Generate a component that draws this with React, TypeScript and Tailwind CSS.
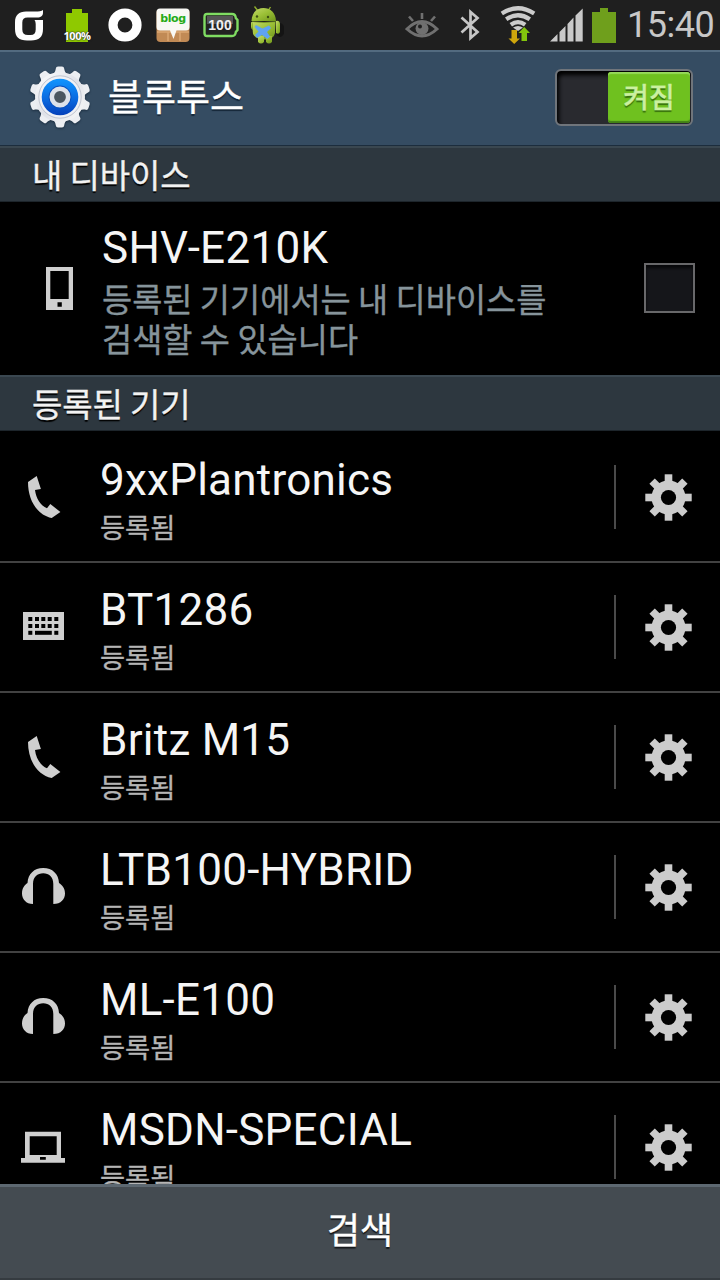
import clsx from 'clsx';
import React, { useState } from 'react';

type DeviceKind = 'phone' | 'keyboard' | 'headphones' | 'laptop';

interface Device {
  name: string;
  kind: DeviceKind;
}

const devices: Device[] = [
  { name: '9xxPlantronics', kind: 'phone' },
  { name: 'BT1286', kind: 'keyboard' },
  { name: 'Britz M15', kind: 'phone' },
  { name: 'LTB100-HYBRID', kind: 'headphones' },
  { name: 'ML-E100', kind: 'headphones' },
  { name: 'MSDN-SPECIAL', kind: 'laptop' },
];

const latin = "font-['Roboto','Noto_Sans_CJK_KR',sans-serif]";
const korean =
  "font-['Noto_Sans_CJK_KR',sans-serif] [-webkit-text-stroke:0.35px_currentColor]";

const DeviceIcon = ({ kind }: { kind: DeviceKind }) => (
  <svg viewBox="0 0 48 48" className="w-12 h-12 shrink-0" fill="#cfcfcf">
    {kind === 'phone' && (
      <path d="M8 9 16.7 3 20.9 16 15 17C16 25.5 20.5 32.5 27 35.3L30.3 31 40.4 39 31.7 45C17 42 8 27 8 9Z" />
    )}
    {kind === 'keyboard' && (
      <>
        <path d="M3 9H44V37H3Z" />
        <g fill="#000">
          {[8.3, 15, 21.3, 27.7, 34.3].map(x => (
            <React.Fragment key={x}>
              <rect x={x} y={14} width={4} height={4} />
              <rect x={x} y={21} width={4} height={4} />
            </React.Fragment>
          ))}
          <rect x={8.3} y={27.8} width={4} height={4} />
          <rect x={15} y={27.8} width={16.8} height={4} />
          <rect x={34.3} y={27.8} width={4} height={4} />
        </g>
      </>
    )}
    {kind === 'headphones' && (
      <path d="M13 41C6 41 2 36 2 30.5 2 25 4.6 22 7.5 20 8 11 14 5 23.2 5 32.5 5 38.6 11 39 20 42 22 45 25 45 30.5 45 36 41 41 33.3 41V21C33.3 14 29 10.3 23.2 10.3 17.4 10.3 13 14 13 21Z" />
    )}
    {kind === 'laptop' && (
      <path
        fillRule="evenodd"
        d="M5 8.7H41V35H45V39.7H1V35H5ZM9.7 13.3V32H36.7V13.3ZM20 34V36.8H25.8V34Z"
      />
    )}
  </svg>
);

const GearIcon = () => (
  <svg viewBox="-24.5 -24.5 48 48" className="w-12 h-12" fill="#cccccc">
    {[0, 45, 90, 135].map(angle => (
      <rect
        key={angle}
        x={-3.8}
        y={-23.2}
        width={7.6}
        height={46.4}
        transform={`rotate(${angle})`}
      />
    ))}
    <circle r={17} />
    <circle r={7.6} fill="#000" />
  </svg>
);

const SettingsLogo = () => (
  <svg viewBox="-32 -32 64 64" className="w-16 h-16 drop-shadow-[0_1px_1px_#1a2c3e]">
    <defs>
      <linearGradient id="metal" x1="0" y1="0" x2="1" y2="1">
        <stop offset="0" stopColor="#fff" />
        <stop offset=".5" stopColor="#dfe1e8" />
        <stop offset="1" stopColor="#fafafa" />
      </linearGradient>
      <linearGradient id="blue" x1="0" y1="0" x2="0" y2="1">
        <stop offset="0" stopColor="#1195ff" />
        <stop offset=".55" stopColor="#0a6ae0" />
        <stop offset="1" stopColor="#0540ba" />
      </linearGradient>
    </defs>
    <g fill="#eceef2">
      {[0, 36, 72, 108, 144, 180, 216, 252, 288, 324].map(angle => (
        <path
          key={angle}
          d="M-7.5-22C-5.5-24-4.5-26-4.2-28.5Q-4-30.5-2-30.5H2Q4-30.5 4.2-28.5C4.5-26 5.5-24 7.5-22Z"
          transform={`rotate(${angle})`}
        />
      ))}
    </g>
    <circle r={25} fill="url(#metal)" />
    <circle r={21.2} fill="#f0f1f5" stroke="#b4b9c6" strokeWidth={0.8} />
    <circle r={18.3} fill="url(#blue)" />
    <circle r={11.4} fill="#0a50bd" />
    <circle r={8.2} fill="#4a5560" stroke="#dde1ea" strokeWidth={4.6} />
  </svg>
);

const AndroidIcon = () => (
  <svg viewBox="0 0 34 40" className="w-[34px] h-10 ml-[11px] shrink-0">
    <defs>
      <linearGradient id="droid" x1="0" y1="0" x2="1" y2="1">
        <stop offset="0" stopColor="#c3d96a" />
        <stop offset=".5" stopColor="#9abf35" />
        <stop offset="1" stopColor="#6f951c" />
      </linearGradient>
    </defs>
    <ellipse cx={30} cy={25} rx={4.5} ry={7} fill="#141414" />
    <path d="M4.5 1.5 8 6M20.5 2 18 6" stroke="#8fae2c" strokeWidth={1.4} />
    <g fill="url(#droid)">
      <path d="M1.5 16C2 7 7 3 13.500 3S25.500 7 26 16Z" />
      <path d="M2 17H25.500L25 28Q24 34 15 34.500 5 34 3 29Z" />
      <path d="M26 16Q29.500 15 30 19V27Q29 30 26 28Z" />
      <path d="M1 17Q3 17 3 19V25Q1 24 1 22Z" />
      <path d="M8 31H14V37Q11 40 8 37ZM16 31H22V37Q19 40 16 37Z" />
    </g>
    <path d="M2 16.500Q14 18.500 26 16.500" stroke="#66861e" strokeWidth={0.8} fill="none" />
    <circle cx={7} cy={11.500} r={1.2} fill="#3c4f10" />
    <circle cx={18} cy={12} r={1.2} fill="#3c4f10" />
    <path d="M6 20 12.500 23.500 19 20.500 21 23 17 27 20 31.500 17.500 34 12 30 7 33 5 30 8.500 26.500 4.500 22Z" fill="#5fa3f2" />
  </svg>
);

const StatusBar = () => (
  <div className="flex items-center h-[50px] bg-[#1f1f1f] shrink-0">
    <svg viewBox="0 0 28 32" className="w-7 h-8 ml-[15px] shrink-0">
      <path
        fill="#fff"
        d="M28 1V3.500C28 7 26 8.500 22 8.500H12.500Q7.300 8.500 7.300 13.500V20.500Q7.300 26 13 26H15.500Q20.700 26 20.700 20.500V15Q20.700 12.500 19.500 11H28V20C28 28 24 31.500 16 31.500H12C4 31.500 0 28 0 20V13.500C0 6 4 2.500 11 2.500H20C24 2.500 26.500 2.300 28 1Z"
      />
    </svg>

    <div className="relative w-[28px] h-9 ml-[20px] shrink-0">
      <svg viewBox="0 0 28 36" className="w-7 h-9">
        <path d="M3 6H9V2H19V6H25V35H3Z" fill="#8fc900" />
      </svg>
      <span className="absolute left-0 bottom-px w-7 text-center text-[11px] leading-[13px] font-bold text-white tracking-[-0.4px] [text-shadow:0_0_2px_#222,0_0_1px_#222] font-['Open_Sans',sans-serif]">
        100%
      </span>
    </div>

    <svg viewBox="0 0 34 34" className="w-[34px] h-[34px] ml-[17px] shrink-0">
      <circle cx={17} cy={17} r={12} fill="none" stroke="#fff" strokeWidth={9.2} />
    </svg>

    <div className="relative w-[34px] h-[34px] ml-[14px] shrink-0">
      <svg viewBox="0 0 34 34" className="w-[34px] h-[34px]">
        <rect x={0.5} y={1} width={33} height={33} rx={4} fill="#c18a55" />
        <path d="M1 24H33M12 24V33M24 24V33" stroke="#dba873" strokeWidth={1.5} />
        <path
          d="M4 0.500H30Q33.500 0.500 33.500 4V19Q33.500 22.500 30 22.500H20.500L17.500 31 14 22.500H4Q0.500 22.500 0.500 19V4Q0.500 0.500 4 0.500Z"
          fill="#f8f8f4"
        />
      </svg>
      <span className="absolute left-0 top-[3px] w-[34px] text-center text-[11px] leading-[16px] font-bold text-[#25ab18] font-['DejaVu_Sans',sans-serif] tracking-[-0.4px]">
        blog
      </span>
    </div>

    <div className="relative w-[36px] h-[26px] ml-[13px] shrink-0">
      <svg viewBox="0 0 36 26" className="w-9 h-[26px]">
        <path
          d="M4 2H29Q32.500 2 32.800 6L34.500 8V18L32.800 20Q32.500 24 29 24H4Q1.500 24 1.500 21V5Q1.500 2 4 2Z"
          fill="#222"
          stroke="#7fdc62"
          strokeWidth={2.4}
        />
        <path d="M4 4H30V12H4Z" fill="#555" />
      </svg>
      <span className="absolute left-0 top-[4px] w-[34px] text-center text-[14px] leading-[18px] font-bold text-[#f0f0f0] font-['Liberation_Sans',sans-serif]">
        100
      </span>
    </div>

    <AndroidIcon />

    <svg viewBox="0 0 34 28" className="w-[34px] h-7 ml-auto shrink-0" fill="none">
      <path d="M2 18Q17 3 32 18 17 32 2 18Z" stroke="#707070" strokeWidth={3} />
      <circle cx={17} cy={17.500} r={6.500} fill="#707070" />
      <circle cx={15} cy={15.500} r={2} fill="#1f1f1f" />
      <path d="M17 2V8M4 5.500 8 10M30 5.500 26 10" stroke="#707070" strokeWidth={2.600} />
    </svg>

    <svg viewBox="0 0 22 34" className="w-[22px] h-[34px] ml-[20px] shrink-0" fill="none">
      <path
        d="M2.500 9.500 18.500 24 11.500 30V4L18.500 10 2.500 24.500"
        stroke="#c6c6c6"
        strokeWidth={2.700}
      />
    </svg>

    <svg viewBox="0 0 36 38" className="w-9 h-[38px] ml-[19px] shrink-0" fill="none">
      <g stroke="#cbcbcb" strokeWidth={4.2}>
        <path d="M1.800 7.500Q18 -3 34.200 7.500" />
        <path d="M6.200 13.300Q18 5.200 29.800 13.300" />
        <path d="M10.800 18.800Q18 13.500 25.200 18.800" />
      </g>
      <path d="M13 21.500Q18 18.500 23 21.500L18 25Z" fill="#cbcbcb" />
      <path d="M11.500 24H17V32.500H20L14.200 38 8.500 32.500H11.500Z" fill="#cfa60c" />
      <path d="M24.200 21 30 27H27V35H21.500V27H18.500Z" fill="#83c50d" />
    </svg>

    <svg viewBox="0 0 33 34" className="w-[33px] h-[34px] ml-[14px] shrink-0" fill="#c9c9c9">
      <path d="M0 33.500 7.500 26V33.500ZM9.500 24 15.500 18V33.500H9.500ZM17.500 16 23.500 9.500V33.500H17.500ZM25.500 7.500 32.700 0.500V33.500H25.500Z" />
    </svg>

    <svg viewBox="0 0 24 36" className="w-6 h-9 ml-[9px] shrink-0">
      <path d="M0 5H8V1H16V5H24V36H0Z" fill="#6f9f1c" />
    </svg>

    <span
      className={clsx(
        latin,
        'w-[93px] ml-[11px] text-[36px] leading-[50px] tracking-[-0.5px] text-[#c8c8c8]',
      )}
    >
      15:40
    </span>
  </div>
);

const SectionHeader = ({ title }: { title: string }) => (
  <div
    className={clsx(
      korean,
      'h-14 shrink-0 pl-8 border-t-2 border-t-[#3a4750] border-b border-b-[#1d252b] bg-[#2d373f] text-[33px] leading-[52px] tracking-[-0.1px] text-[#f2f2f2] [text-shadow:0_2px_1px_#000]',
    )}
  >
    {title}
  </div>
);

const DeviceRow = ({ device }: { device: Device }) => (
  <div className="flex h-[130px] shrink-0 pl-5 border-b-2 border-[#424242]">
    <div className="flex items-center">
      <DeviceIcon kind={device.kind} />
    </div>

    <div className="flex-1 pl-8 pt-[22px]">
      <div
        className={clsx(latin, 'text-[44px] leading-[50px] tracking-[0.25px] text-[#f5f5f5]')}
      >
        {device.name}
      </div>
      <div className={clsx(korean, 'mt-[3px] text-[27.3px] leading-9 text-[#b5b5b5]')}>
        등록됨
      </div>
    </div>

    <div className="flex items-center">
      <div className="w-0.5 h-16 bg-[#4a4a4a]" />
      <button className="ml-[28px] mr-7">
        <GearIcon />
      </button>
    </div>
  </div>
);

export default function App() {
  const [isOn, setIsOn] = useState(true);
  const [isVisible, setIsVisible] = useState(false);

  return (
    <div className="flex flex-col w-[720px] h-[1280px] overflow-hidden bg-black">
      <StatusBar />

      <div className="flex items-start h-24 shrink-0 pl-7 pr-[27px] border-t-2 border-t-[#536b80] border-b border-b-[#1c2d3d] bg-[#354c62]">
        <div className="mt-[13px]">
          <SettingsLogo />
        </div>
        <h1
          className={clsx(
            korean,
            'flex-1 ml-[16px] text-[37px] leading-[87px] text-white [text-shadow:0_2px_1px_#152638]',
          )}
        >
          블루투스
        </h1>
        <button
          onClick={() => setIsOn(!isOn)}
          className={clsx(
            'flex mt-[17px] w-[138px] h-[57px] p-px rounded-md border-2 border-[#70757b] bg-[#292a2f] shadow-[inset_2px_4px_4px_#000]',
            isOn ? 'justify-end' : 'justify-start',
          )}
        >
          <span
            className={clsx(
              korean,
              'w-[82px] h-[51px] rounded-[3px] bg-[#6fc11f] text-[28px] leading-[48px] font-medium text-[#cbf0a0] [text-shadow:0_2px_1px_#37700c] shadow-[inset_0_2px_1px_#96d95a,inset_0_-2px_1px_#418015]',
            )}
          >
            {isOn ? '켜짐' : '꺼짐'}
          </span>
        </button>
      </div>

      <SectionHeader title="내 디바이스" />

      <div className="flex items-center h-[173px] shrink-0 pl-[46px] pr-[25px]">
        <svg viewBox="0 0 27 43" className="w-[27px] h-[43px]">
          <path
            fill="#cfcfcf"
            fillRule="evenodd"
            d="M0 0H27V43H0ZM4.300 4V32H22.700V4ZM11.500 35.300V39.700H15.800V35.300Z"
          />
        </svg>
        <div className="flex-1 self-start ml-[29px] pt-[20px]">
          <div
            className={clsx(latin, 'text-[44px] leading-[52px] tracking-[0.3px] text-[#f5f5f5]')}
          >
            SHV-E210K
          </div>
          <div className={clsx(korean, 'mt-1 text-[32.8px] leading-10 text-[#86949b]')}>
            <div>등록된 기기에서는 내 디바이스를</div>
            <div>검색할 수 있습니다</div>
          </div>
        </div>
        <button
          onClick={() => setIsVisible(!isVisible)}
          className="w-[51px] h-[50px] mb-0.5 border-2 border-[#68686a] bg-[#15161a] shadow-[inset_0_3px_3px_#08080a] text-3xl text-[#6fc11f]"
        >
          {isVisible ? '✓' : null}
        </button>
      </div>

      <SectionHeader title="등록된 기기" />

      <div className="flex flex-col flex-1 min-h-0 pt-0.5 overflow-hidden">
        {devices.map(device => (
          <DeviceRow key={device.name} device={device} />
        ))}
      </div>

      <button
        className={clsx(
          korean,
          'flex justify-center h-24 shrink-0 border-t-[3px] border-t-[#5d6871] border-b-2 border-b-[#353b40] bg-[#444b51] text-[36px] leading-[83px] text-white [text-shadow:0_2px_1px_#15191c]',
        )}
      >
        검색
      </button>
    </div>
  );
}
